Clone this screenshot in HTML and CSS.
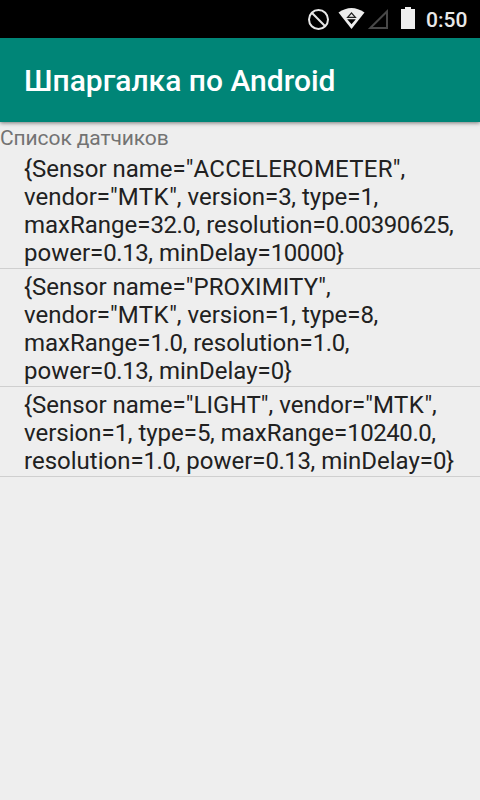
FILE: index.html
```html
<!DOCTYPE html>
<html lang="ru">
<head>
<meta charset="utf-8">
<title>Шпаргалка по Android</title>
<link rel="stylesheet" href="styles.css">
</head>
<body>
<div class="status-bar">
  <svg class="status-icons" width="120" height="38" viewBox="300 0 120 38" aria-hidden="true">
    <circle cx="318.5" cy="19.5" r="9.5" fill="none" stroke="#e8e8e8" stroke-width="2"/>
    <path d="M311.8 12.8L325.2 26.2" stroke="#e8e8e8" stroke-width="2"/>
    <path d="M338.5 12.5Q351.5 3.5 364.5 12.5L351.5 29Z" fill="#ededed"/>
    <path d="M347.6 17.3L351.5 13L355.4 17.3Z" fill="none" stroke="#222" stroke-width="1.2"/>
    <path d="M347.2 19.3H355.8L351.5 24.2Z" fill="#000"/>
    <path d="M370.3 28L387 11.5V28Z" fill="none" stroke="#484848" stroke-width="2"/>
    <path d="M401 9H405V7H411V9H415V29H401Z" fill="#eeeeee"/>
  </svg>
  <span class="clock">0:50</span>
</div>
<header class="app-bar"><h1 class="title">Шпаргалка по Android</h1></header>
<main>
  <p class="caption">Список датчиков</p>
  <ul class="sensors">
    <li class="sensor">{Sensor name="<span class="name-wide">ACCELEROMETER</span>",<br>vendor="<span class="vendor">MTK</span>", version=<span class="num">3</span>, type=<span class="num">1</span>,<br>maxRange=<span class="num">32.0</span>, resolution=<span class="num">0.00390625</span>,<br>power=<span class="num">0.13</span>, minDelay=<span class="num">10000</span>}</li>
    <li class="sensor">{Sensor name="<span class="name">PROXIMITY</span>",<br>vendor="<span class="vendor">MTK</span>", version=<span class="num">1</span>, type=<span class="num">8</span>,<br>maxRange=<span class="num">1.0</span>, resolution=<span class="num">1.0</span>,<br>power=<span class="num">0.13</span>, minDelay=<span class="num">0</span>}</li>
    <li class="sensor">{Sensor name="<span class="name">LIGHT</span>", vendor="<span class="vendor">MTK</span>",<br>version=<span class="num">1</span>, type=<span class="num">5</span>, maxRange=<span class="num">10240.0</span>,<br>resolution=<span class="num">1.0</span>, power=<span class="num">0.13</span>, minDelay=<span class="num">0</span>}</li>
  </ul>
</main>
</body>
</html>
```
FILE: styles.css
```css
* { box-sizing: border-box; }

body {
  margin: 0;
  min-height: 800px;
  background: #eeeeee;
  color: #212121;
  font-family: Roboto, sans-serif;
}

.status-bar {
  display: flex;
  height: 38px;
  padding-left: 300px;
  background: #000;
}

.status-icons { flex: none; }

.clock {
  padding-left: 6px;
  color: #e8e8e8;
  font-size: 21px;
  font-weight: 500;
  line-height: 40px;
}

.app-bar {
  display: flex;
  align-items: center;
  height: 84px;
  padding: 2px 24px 0;
  background: #008577;
  box-shadow: 0 1px 4px rgba(0, 0, 0, 0.5);
}

.title {
  margin: 0;
  color: #fff;
  font-size: 30px;
  font-weight: 500;
  line-height: 36px;
  white-space: nowrap;
}

.caption {
  height: 29px;
  margin: 0;
  padding-top: 4px;
  color: #737373;
  font-size: 21px;
  letter-spacing: -0.1px;
  line-height: 25px;
}

.sensors {
  margin: 0;
  padding: 0;
  list-style: none;
}

.sensor {
  padding: 4px 0 1px 24px;
  border-bottom: 1px solid #cfcfcf;
  font-size: 24px;
  line-height: 28px;
  white-space: nowrap;
}

.name { letter-spacing: 0.1px; }
.name-wide { letter-spacing: 0.27px; }
.vendor { letter-spacing: 0.5px; }
.num { letter-spacing: -0.45px; }
```
